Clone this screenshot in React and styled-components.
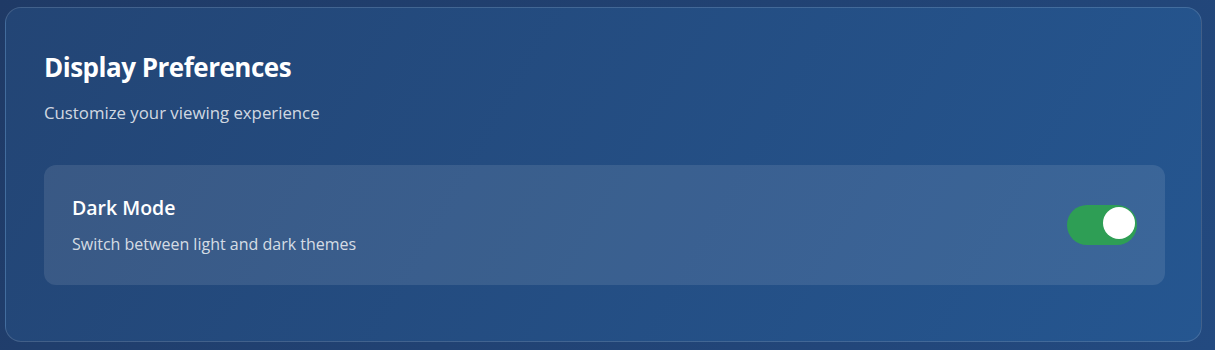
import React, {useState} from 'react';
import styled, {createGlobalStyle} from 'styled-components';

const GlobalStyle = createGlobalStyle`
  html, body {
    margin: 0;
    padding: 0;
    background: #213d6b;
    font-family: "Open Sans", "Noto Sans", sans-serif;
  }
`;

const Page = styled.div`
  width: 1215px;
  height: 350px;
  box-sizing: border-box;
  padding: 7px 13px 8px 5px;
  background: linear-gradient(135deg, #1f3a66 0%, #234a80 100%);
`;

const Card = styled.section`
  box-sizing: border-box;
  height: 100%;
  padding: 42px 36px 0 38px;
  border-radius: 16px;
  border: 1px solid rgba(255, 255, 255, 0.14);
  background: linear-gradient(120deg, #234575 0%, #255690 100%);
  color: #fff;
`;

const Title = styled.h2`
  margin: 0;
  font-size: 26px;
  line-height: 34px;
  font-weight: 700;
  letter-spacing: -0.5px;
`;

const Subtitle = styled.p`
  margin: 16.5px 0 0;
  font-size: 16.8px;
  line-height: 24px;
  color: rgba(255, 255, 255, 0.8);
`;

const SettingRow = styled.div`
  margin-top: 40.5px;
  display: flex;
  align-items: center;
  justify-content: space-between;
  padding: 30.4px 28px 30.2px;
  border-radius: 12px;
  background: rgba(255, 255, 255, 0.1);
`;

const Label = styled.div`
  display: flex;
  flex-direction: column;
  gap: 11.4px;
`;

const LabelTitle = styled.span`
  font-size: 19.5px;
  line-height: 26px;
  font-weight: 600;
`;

const LabelHint = styled.span`
  font-size: 16px;
  line-height: 22px;
  color: rgba(255, 255, 255, 0.8);
`;

const Track = styled.button`
  position: relative;
  flex-shrink: 0;
  width: 70px;
  height: 40px;
  padding: 0;
  border: none;
  border-radius: 20px;
  cursor: pointer;
  background: ${p => (p.$on ? '#2e9e55' : 'rgba(255,255,255,0.25)')};
  transition: background 0.2s;
`;

const Thumb = styled.span`
  position: absolute;
  top: 2px;
  left: ${p => (p.$on ? '36px' : '2px')};
  width: 32px;
  height: 32px;
  border-radius: 50%;
  background: #fff;
  transition: left 0.2s;
`;

export default function App () {
  const [dark, setDark] = useState (true);

  return (
    <Page>
      <GlobalStyle />
      <Card>
        <Title>Display Preferences</Title>
        <Subtitle>Customize your viewing experience</Subtitle>
        <SettingRow>
          <Label>
            <LabelTitle>Dark Mode</LabelTitle>
            <LabelHint>Switch between light and dark themes</LabelHint>
          </Label>
          <Track $on={dark} onClick={() => setDark (!dark)} aria-label="Toggle dark mode">
            <Thumb $on={dark} />
          </Track>
        </SettingRow>
      </Card>
    </Page>
  );
}
